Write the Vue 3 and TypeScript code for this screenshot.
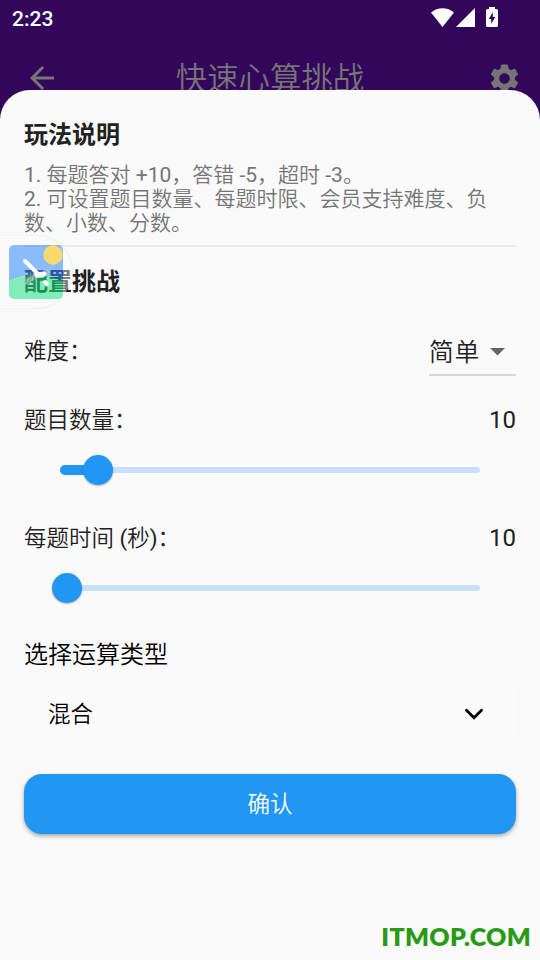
<script setup lang="ts">
import { computed, ref } from 'vue'

interface SliderRow {
  label: string
  value: number
  position: number
}

const difficulty = ref('简单')
const operation = ref('混合')
const sliders = ref<SliderRow[]>([
  { label: '题目数量：', value: 10, position: 38 },
  { label: '每题时间 (秒)：', value: 10, position: 7 },
])
const rows = computed(() =>
  sliders.value.map((s) => ({ ...s, active: s.position > 15 })),
)
</script>

<template>
  <div class="screen">
    <header class="status">
      <span class="clock">2:23</span>
      <span class="status-icons">
        <svg class="wifi" width="23" height="19" viewBox="0 0 23 19">
          <path d="M0 4.6Q5 .2 11.5 .2T23 4.6L11.5 19Z" fill="#fff" />
        </svg>
        <svg class="signal" width="19" height="19" viewBox="0 0 19 19">
          <path d="M19 0V19H0Z" fill="#fff" />
        </svg>
        <svg class="battery" width="12" height="20" viewBox="0 0 12 20">
          <path d="M3 0H9V2H10.5Q12 2 12 3.5V18.5Q12 20 10.5 20H1.5Q0 20 0 18.5V3.5Q0 2 1.5 2H3Z" fill="#fff" />
          <path d="M6.8 5V10H9.3L5.2 17V12H2.8Z" fill="#32065b" />
        </svg>
      </span>
    </header>

    <nav class="appbar">
      <svg class="back" width="36" height="36" viewBox="0 0 24 24">
        <path d="M20 11H7.83l5.59-5.59L12 4l-8 8 8 8 1.41-1.41L7.83 13H20v-2z" fill="#757575" />
      </svg>
      <h1>快速心算挑战</h1>
      <svg class="gear" width="35" height="35" viewBox="0 0 24 24">
        <path
          fill="#757575"
          d="M19.14 12.94c.04-.3.06-.61.06-.94 0-.32-.02-.64-.07-.94l2.03-1.58c.18-.14.23-.41.12-.61l-1.92-3.32c-.12-.22-.37-.29-.59-.22l-2.39.96c-.5-.38-1.03-.7-1.62-.94l-.36-2.54c-.04-.24-.24-.41-.48-.41h-3.84c-.24 0-.43.17-.47.41l-.36 2.54c-.59.24-1.13.57-1.62.94l-2.39-.96c-.22-.08-.47 0-.59.22L2.74 8.87c-.12.21-.08.47.12.61l2.03 1.58c-.05.3-.09.63-.09.94s.02.64.07.94l-2.03 1.58c-.18.14-.23.41-.12.61l1.92 3.32c.12.22.37.29.59.22l2.39-.96c.5.38 1.03.7 1.62.94l.36 2.54c.05.24.24.41.48.41h3.84c.24 0 .44-.17.47-.41l.36-2.54c.59-.24 1.13-.56 1.62-.94l2.39.96c.22.08.47 0 .59-.22l1.92-3.32c.12-.22.07-.47-.12-.61l-2.01-1.58zM12 15.6c-1.98 0-3.6-1.62-3.6-3.6s1.62-3.6 3.6-3.6 3.6 1.62 3.6 3.6-1.62 3.6-3.6 3.6z"
        />
      </svg>
    </nav>

    <main class="sheet">
      <h2>玩法说明</h2>
      <p class="rules">
        1. 每题答对 +10，答错 -5，超时 -3。<br />
        2. 可设置题目数量、每题时限、会员支持难度、负<br />数、小数、分数。
      </p>
      <hr />
      <h2 class="config">配置挑战</h2>

      <div class="row difficulty">
        <span>难度：</span>
        <button class="select">
          <span>{{ difficulty }}</span>
          <svg width="15" height="8" viewBox="0 0 15 8"><path d="M0 0H15L7.5 7.5Z" fill="#666" /></svg>
        </button>
      </div>

      <section v-for="row in rows" :key="row.label" class="setting">
        <div class="row">
          <span>{{ row.label }}</span>
          <span class="value">{{ row.value }}</span>
        </div>
        <div class="slider">
          <i v-if="row.active" class="filled" :style="{ width: row.position + 'px' }"></i>
          <i class="thumb" :style="{ left: row.position + 'px' }"></i>
        </div>
      </section>

      <h3>选择运算类型</h3>
      <button class="operation">
        <span>{{ operation }}</span>
        <svg width="20" height="14" viewBox="0 0 20 14">
          <path d="M2.5 3.2L10 10.7L17.5 3.2" fill="none" stroke="#000" stroke-width="2.8" stroke-linecap="round" />
        </svg>
      </button>
      <button class="confirm"><span>确认</span></button>
    </main>

    <aside class="floating">
      <svg width="54" height="54" viewBox="0 0 54 54">
        <defs>
          <clipPath id="tile"><rect width="54" height="54" rx="5" /></clipPath>
          <clipPath id="land"><path d="M0 36Q27 23 54 36V54H0Z" /></clipPath>
          <clipPath id="air"><path d="M0 0H54V36Q27 23 0 36Z" /></clipPath>
        </defs>
        <g clip-path="url(#tile)" opacity=".56">
          <rect width="54" height="54" fill="#328aff" clip-path="url(#air)" />
          <rect width="54" height="54" fill="#22e384" clip-path="url(#land)" />
        </g>
        <circle cx="44" cy="10" r="9.7" fill="#fbd96b" />
        <g fill="none" stroke-linecap="round">
          <path d="M17 37L28 30M37 27H38" stroke="#b9c6c6" stroke-width="5" opacity=".65" />
          <path d="M16 37L20 30M20 38L24 29M24 36L28 28" stroke="#6c8f8b" stroke-width="1" opacity=".7" />
          <path d="M16 16L29 29M36 37L38 39" stroke="#fff" stroke-width="4" />
          <path d="M28 30L35 29" stroke="#fff" stroke-width="5" />
        </g>
      </svg>
    </aside>
    <span class="site">ITMOP.COM</span>
  </div>
</template>

<style>
body {
  margin: 0;
}
</style>

<style scoped>
.screen {
  position: relative;
  display: flex;
  flex-direction: column;
  width: 540px;
  height: 960px;
  overflow: hidden;
  background: #32065b;
  color: #212121;
  font-family: Roboto, 'Noto Sans CJK SC DemiLight', 'Noto Sans CJK SC', sans-serif;
  font-size: 22.5px;
  font-weight: 400;
}
.screen * {
  box-sizing: border-box;
}
button {
  border: 0;
  padding: 0;
  background: none;
  font: inherit;
  color: inherit;
}
h1, h2, h3, p, hr {
  margin: 0;
}
h1, h2, h3, button {
  font-family: Roboto, 'Noto Sans CJK SC', sans-serif;
  font-weight: 350;
}
.status {
  display: flex;
  justify-content: space-between;
  height: 36px;
  padding: 0 42px 0 12px;
  color: #fff;
}
.clock {
  font-size: 21px;
  font-weight: 500;
  line-height: 38px;
}
.status-icons {
  display: flex;
  align-items: flex-start;
  padding-top: 8px;
}
.signal {
  margin-left: 2px;
}
.battery {
  margin: -1px 0 0 11px;
}
.appbar {
  display: flex;
  align-items: center;
  justify-content: space-between;
  flex: none;
  height: 54px;
  padding: 30px 18px 0 24px;
  color: #757575;
}
h1 {
  margin-right: 7px;
  padding-top: 4px;
  font-size: 31.4px;
  line-height: 46px;
}
.appbar > * {
  flex: none;
}
.sheet {
  display: flex;
  flex-direction: column;
  flex: 1;
  padding: 25px 24px 0;
  border-radius: 30px 30px 0 0;
  background: #fafafa;
  position: relative;
}
h2 {
  height: 40px;
  font-size: 24px;
  font-weight: 700;
  line-height: 40px;
}
.rules {
  height: 72px;
  margin-top: 8px;
  color: #757575;
  font-size: 21px;
  line-height: 24px;
  white-space: nowrap;
}
hr {
  height: 2px;
  margin-top: 10px;
  border: 0;
  background: #ebebeb;
}
.config {
  margin-top: 15px;
}
.row {
  display: flex;
  align-items: center;
  justify-content: space-between;
  height: 36px;
  line-height: 36px;
}
.difficulty {
  height: 50px;
  margin-top: 24px;
}
.select {
  display: flex;
  align-items: center;
  width: 87px;
  height: 50px;
  gap: 10px;
  padding-top: 4px;
  border-bottom: 2px solid #d8d8d8;
  font-size: 24.75px;
  letter-spacing: .75px;
}
.select span {
  padding-top: 2px;
}
.value {
  font-size: 24px;
}
.setting {
  height: 118px;
  padding-top: 26px;
}
.slider {
  position: relative;
  height: 6px;
  margin: 29px 36px 0;
  border-radius: 3px;
  background: #c5e1f9;
}
.filled {
  position: absolute;
  left: 0;
  top: -2px;
  height: 10px;
  border-radius: 5px;
  background: #2196f3;
}
.thumb {
  position: absolute;
  top: -12px;
  width: 30px;
  height: 30px;
  margin-left: -15px;
  border-radius: 50%;
  background: #2196f3;
  box-shadow: 0 1px 2px rgba(0, 0, 0, .3);
}
h3 {
  height: 36px;
  margin-top: 25px;
  color: #000;
  font-size: 24px;
  line-height: 36px;
}
.operation {
  display: flex;
  align-items: center;
  justify-content: space-between;
  height: 72px;
  margin-top: 5px;
  padding: 0 32px 0 24px;
  border-radius: 15px;
  background: #fbfbfb;
  color: #000;
}
.operation span {
  padding-bottom: 4px;
}
.confirm {
  height: 60px;
  margin-top: 24px;
  padding-bottom: 4px;
  border-radius: 18px;
  background: #2196f3;
  box-shadow: 0 2px 4px rgba(0, 0, 0, .35);
  color: #fff;
}
.floating {
  position: absolute;
  left: -2px;
  top: 236px;
  width: 74px;
  height: 72px;
  padding: 9px 11px;
  border-radius: 0 36px 36px 0;
  background: linear-gradient(90deg, transparent 65px, rgba(252, 252, 252, .42) 65px);
  box-shadow: 0 0 3px rgba(0, 0, 0, .1);
}
.floating svg {
  display: block;
}
.site {
  position: absolute;
  right: 9px;
  bottom: 6px;
  color: #299a16;
  font-family: Lato, sans-serif;
  font-size: 25px;
  font-weight: 800;
  letter-spacing: .3px;
  line-height: 36px;
}
</style>
